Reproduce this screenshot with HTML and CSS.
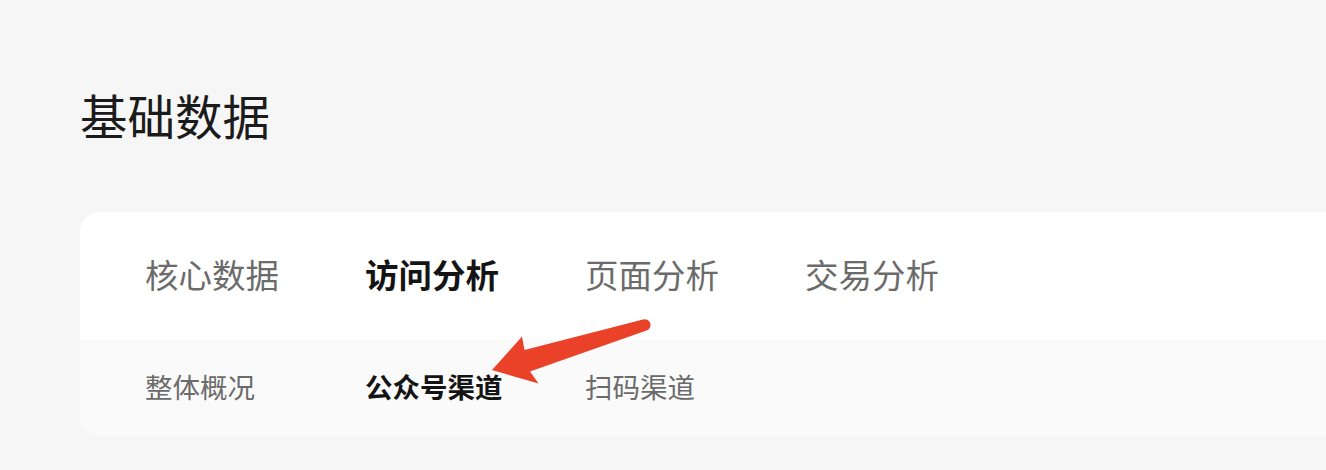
FILE: index.html
```html
<!DOCTYPE html>
<html lang="zh-CN">
<head>
  <meta charset="UTF-8" />
  <meta name="viewport" content="width=device-width, initial-scale=1.0" />
  <title>基础数据</title>
  <link rel="stylesheet" href="styles.css">
</head>
<body>
  <h1 class="page-title">基础数据</h1>

  <div class="panel">
    <div class="main-tabs">
      <div class="tab">核心数据</div>
      <div class="tab active">访问分析</div>
      <div class="tab">页面分析</div>
      <div class="tab">交易分析</div>
    </div>
    <div class="sub-tabs">
      <div class="tab">整体概况</div>
      <div class="tab active">公众号渠道</div>
      <div class="tab">扫码渠道</div>
    </div>
  </div>

  <!-- annotation arrow -->
  <svg class="pointer" width="1326" height="470" viewBox="0 0 1326 470">
    <path d="M492 370 L522 336.5 L524.5 350 L643 319.5 A5.5 5.5 0 0 1 646.5 330.5 L530 371.5 L538.5 383.5 Z" fill="#ea4129"/>
  </svg>
</body>
</html>
```

FILE: styles.css
```css
html, body {
  margin: 0;
  padding: 0;
  background: #f6f6f6;
  font-family: "Noto Sans CJK SC", "Noto Sans", sans-serif;
  overflow: hidden;
  height: 470px;
}

body {
  position: relative;
  padding-top: 91px;
  box-sizing: border-box;
}

.page-title {
  margin: 0 0 0 80px;
  font-size: 47.5px;
  line-height: 48px;
  font-weight: 400;
  color: #1b1b1b;
}

.panel {
  margin: 73px 0 0 80px;
  background: #ffffff;
  border-radius: 20px 0 0 20px;
  overflow: hidden;
}

.main-tabs,
.sub-tabs {
  display: flex;
  padding-left: 65px;
  box-sizing: border-box;
}

.main-tabs {
  height: 128px;
  padding-bottom: 6px;
  align-items: center;
}

.sub-tabs {
  height: 96px;
  padding-bottom: 4px;
  align-items: center;
  background: #fafafa;
}

.tab {
  width: 220px;
  flex: none;
  color: #6b6b6b;
}

.main-tabs .tab {
  font-size: 33.5px;
}

.sub-tabs .tab {
  font-size: 27.5px;
}

.tab.active {
  color: #141414;
  font-weight: 700;
}

.pointer {
  position: absolute;
  top: 0;
  left: 0;
  pointer-events: none;
}
```
